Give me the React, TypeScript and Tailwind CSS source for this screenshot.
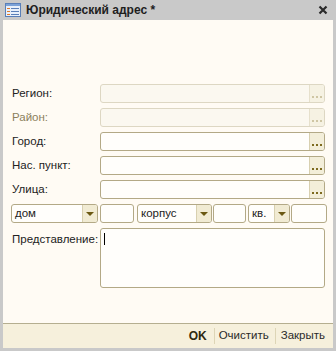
import React from 'react';

const font = { fontFamily: '"Liberation Sans", Arial, sans-serif' };

const Dots = ({ disabled }: { disabled?: boolean }) => (
  <div className="flex gap-[2px] pb-[4px]">
    <div className={`w-[2px] h-[2px] ${disabled ? 'bg-[#cfc6a4]' : 'bg-[#7d6a1e]'}`} />
    <div className={`w-[2px] h-[2px] ${disabled ? 'bg-[#cfc6a4]' : 'bg-[#7d6a1e]'}`} />
    <div className={`w-[2px] h-[2px] ${disabled ? 'bg-[#cfc6a4]' : 'bg-[#7d6a1e]'}`} />
  </div>
);

const Field = ({ label, disabled, muted }: { label: string; disabled?: boolean; muted?: boolean }) => (
  <div className="flex items-center h-[19px]">
    <div className={`w-[97px] pl-[9px] text-[11.5px] ${muted ? 'text-[#8c7f5c]' : 'text-[#222]'}`}>{label}</div>
    <div
      className={`flex w-[225px] h-[19px] rounded-[3px] border overflow-hidden ${
        disabled ? 'border-[#ddd7c3] bg-[#fbf8f0]' : 'border-[#b3a986] bg-[#fffefb]'
      }`}
    >
      <div className="flex-1" />
      <div
        className={`w-[15px] flex items-end justify-center border-l ${
          disabled ? 'border-[#e6e0cc] bg-[#f6f2e3]' : 'border-[#d8d0b0] bg-[#f3eed9]'
        }`}
      >
        <Dots disabled={disabled} />
      </div>
    </div>
  </div>
);

const Combo = ({ text, w }: { text: string; w: string }) => (
  <div className={`flex ${w} h-[19px] rounded-[3px] border border-[#b3a986] bg-[#fffefb] overflow-hidden`}>
    <div className="flex-1 pl-[3px] text-[11.5px] leading-[17px] text-[#222]">{text}</div>
    <div className="w-[15px] flex items-center justify-center border-l border-[#d8d0b0] bg-[#f1ebd3]">
      <div className="w-0 h-0 border-l-[4px] border-r-[4px] border-t-[4px] border-l-transparent border-r-transparent border-t-[#6b5812]" />
    </div>
  </div>
);

const Box = ({ w }: { w: string }) => (
  <div className={`${w} h-[19px] rounded-[3px] border border-[#b3a986] bg-[#fffefb]`} />
);

const FormIcon = () => (
  <svg width="16" height="14" viewBox="0 0 16 14">
    <rect x="0.5" y="0.5" width="15" height="13" fill="#e8f0fb" stroke="#5a7fb8" />
    <rect x="1" y="1" width="14" height="2" fill="#7ba2d8" />
    <rect x="2" y="5" width="3" height="1" fill="#e07a2a" />
    <rect x="6" y="5" width="8" height="1" fill="#5a7fb8" />
    <rect x="2" y="8" width="3" height="1" fill="#e07a2a" />
    <rect x="6" y="8" width="8" height="1" fill="#5a7fb8" />
    <rect x="2" y="11" width="3" height="1" fill="#e07a2a" />
    <rect x="6" y="11" width="8" height="1" fill="#5a7fb8" />
  </svg>
);

export default function App() {
  return (
    <div style={font} className="w-[336px] h-[351px] bg-[#c9c9c9] flex flex-col px-[3px] pb-[3px]">
      <div className="h-[20px] flex items-center">
        <div className="pl-[2px] pr-[5px] flex items-center">
          <FormIcon />
        </div>
        <div className="text-[12px] font-bold text-[#1e1e1e] flex-1">Юридический адрес *</div>
        <svg width="10" height="10" viewBox="0 0 10 10" className="mr-[5px]">
          <path d="M1.5 1.5 L8.5 8.5 M8.5 1.5 L1.5 8.5" stroke="#2a2a2a" strokeWidth="2.2" />
        </svg>
      </div>
      <div className="flex-1 bg-[#fffbf4] flex flex-col pt-[64px] gap-[5px]">
        <Field label="Регион:" disabled />
        <Field label="Район:" disabled muted />
        <Field label="Город:" />
        <Field label="Нас. пункт:" />
        <Field label="Улица:" />
        <div className="flex items-center h-[19px] pl-[8px]">
          <Combo text="дом" w="w-[87px]" />
          <div className="w-[2px]" />
          <Box w="w-[34px]" />
          <div className="w-[3px]" />
          <Combo text="корпус" w="w-[75px]" />
          <div className="w-[1px]" />
          <Box w="w-[33px]" />
          <div className="w-[2px]" />
          <Combo text="кв." w="w-[42px]" />
          <div className="w-[1px]" />
          <Box w="w-[36px]" />
        </div>
        <div className="flex">
          <div className="w-[97px] pl-[9px] pt-[3px] text-[11.5px] text-[#222] whitespace-nowrap">Представление:</div>
          <div className="w-[225px] h-[60px] rounded-[3px] border border-[#b3a986] bg-[#fffefb] pl-[3px] pt-[4px]">
            <div className="w-[1px] h-[12px] bg-black" />
          </div>
        </div>
      </div>
      <div className="h-[25px] border-t border-[#b5ae90] bg-[#f6f0dc] flex items-center justify-end pr-[8px] text-[11.5px] text-[#2a2a2a]">
        <span className="font-bold text-[12px] text-[#2e2a10]">OK</span>
        <div className="w-[1px] h-[16px] bg-[#ddd5b6] ml-[7px] mr-[4px]" />
        <span>Очистить</span>
        <div className="w-[1px] h-[16px] bg-[#ddd5b6] ml-[6px] mr-[5px]" />
        <span>Закрыть</span>
      </div>
    </div>
  );
}
